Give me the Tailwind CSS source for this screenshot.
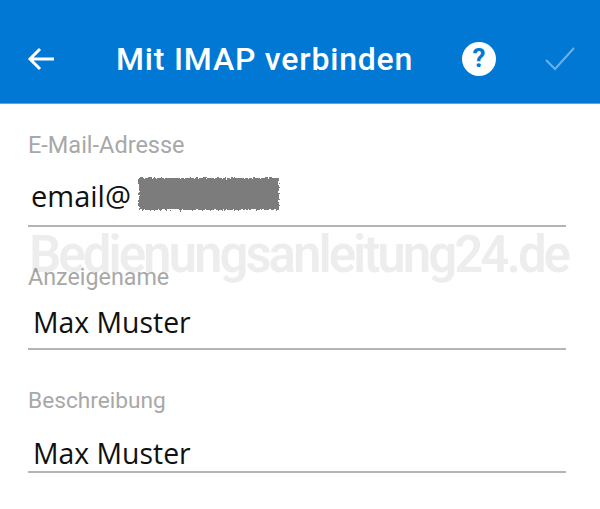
<!DOCTYPE html>
<html><head><script src="https://cdn.jsdelivr.net/npm/@tailwindcss/browser@4"></script></head>
<body class="m-0 w-[600px] h-[509px] bg-white overflow-hidden relative font-['Roboto',sans-serif]">
<header class="h-[104px] bg-[#0078d4] border-b border-[#5aa5e0] flex items-center text-white pt-[14px]">
<svg class="ml-[27px] w-[28px] h-[24px]" viewBox="0 0 28 24" fill="none" stroke="white" stroke-width="3"><path d="M27 12H3M13 2 3 12l10 10"/></svg>
<div class="ml-[61px] w-[296px] text-[32px] font-medium tracking-[0.8px] leading-[40px] whitespace-nowrap">Mit IMAP verbinden</div>
<div class="ml-[50px] w-[34px] h-[34px] rounded-full bg-white flex items-center justify-center text-[#0078d4] text-[26px] font-bold">?</div>
<svg class="ml-[48px] w-[32px] h-[26px]" viewBox="0 0 32 26" fill="none" stroke="#6fb0e6" stroke-width="2"><path d="M2 14l9 9L30 2"/></svg>
</header>
<main class="pl-[28px] w-[566px] flex flex-col">
<div class="mt-[28px] text-[23.5px] leading-[26px] text-[#a8a8a8]">E-Mail-Adresse</div>
<div class="mt-[21px] h-[48px] border-b-2 border-[#b4b4b4] flex items-start font-['Open_Sans',sans-serif] text-[29px] leading-[36px] text-[#111]"><span class="ml-[3px] -mt-[1px]">email@</span>
<svg class="ml-[5px] -mt-[4px] w-[146px] h-[38px]" viewBox="0 0 146 38"><filter id="rough"><feTurbulence type="fractalNoise" baseFrequency="0.5" numOctaves="2" seed="3"/><feDisplacementMap in="SourceGraphic" scale="6" xChannelSelector="R" yChannelSelector="G"/></filter><rect x="3" y="3" width="140" height="32" fill="#7c7c7c" filter="url(#rough)"/></svg></div>
<div class="mt-[37px] text-[23.3px] leading-[26px] text-[#a8a8a8] relative">Anzeigename</div>
<div class="mt-[14px] h-[46px] border-b-2 border-[#b4b4b4] pl-[5px] font-['Open_Sans',sans-serif] text-[28.4px] leading-[36px] text-[#111] whitespace-nowrap">Max Muster</div>
<div class="mt-[38px] text-[22.7px] leading-[26px] text-[#a8a8a8]">Beschreibung</div>
<div class="mt-[22px] h-[37px] border-b-2 border-[#b4b4b4] pl-[5px] font-['Open_Sans',sans-serif] text-[28.4px] leading-[35px] text-[#111] whitespace-nowrap">Max Muster</div>
</main>
<div class="absolute left-[29px] top-[225px] text-[51px] leading-[60px] font-semibold text-black/[0.07] tracking-[-3.03px] whitespace-nowrap">Bedienungsanleitung24.de</div>
</body></html>
